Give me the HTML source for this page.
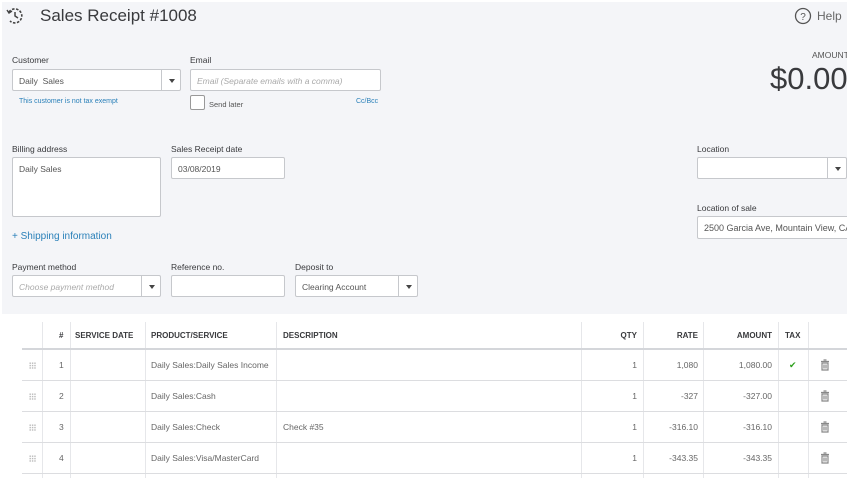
<!DOCTYPE html>
<html><head><meta charset="utf-8"><style>
*{margin:0;padding:0;box-sizing:border-box}
body{width:847px;height:478px;overflow:hidden;background:#fff;font-family:"Liberation Sans",sans-serif;color:#393a3d;position:relative}
.a{position:absolute;white-space:nowrap}
.lbl{font-size:8.5px;color:#393a3d}
.box{position:absolute;background:#fff;border:1px solid #c6c8cc;border-radius:2px}
.dd{position:absolute;top:0;bottom:0;width:19px;border-left:1px solid #c6c8cc}
.dd:after{content:"";position:absolute;left:7px;top:9px;border:3px solid transparent;border-top:4px solid #444}
.t{font-size:8.5px;color:#555}
.hl{position:absolute;left:22px;right:0;height:1px;background:#dcdde0}
.vl{position:absolute;top:322px;bottom:0;width:1px;background:#e6e7ea}
.th{position:absolute;top:331px;font-size:8px;font-weight:bold;color:#393a3d}
.c{position:absolute;font-size:8.5px;color:#666}
.r{text-align:right}
.g{position:absolute;left:29px;width:7px;height:7px;background-image:radial-gradient(circle,#bbb 0.7px,transparent 0.8px);background-size:2.4px 2.4px}
</style></head><body>
<div class="a" style="left:2px;top:2px;width:845px;height:312px;background:#f4f5f8"></div>
<svg class="a" style="left:5px;top:6px" width="20" height="20" viewBox="0 0 20 20"><path d="M4 6 A7 7 0 1 1 5 15" fill="none" stroke="#444" stroke-width="1.6" stroke-dasharray="2.5 1.5"/><path d="M10 6 V10 L13 12" fill="none" stroke="#444" stroke-width="1.5"/><path d="M2 4 L4 7 L7 5" fill="none" stroke="#444" stroke-width="1.4"/></svg>
<div class="a" style="left:40px;top:6px;font-size:17px;color:#393a3d">Sales Receipt #1008</div>
<svg class="a" style="left:794px;top:7px" width="18" height="18"><circle cx="9" cy="9" r="7.5" fill="none" stroke="#555" stroke-width="1.3"/><text x="9" y="13" font-size="10" text-anchor="middle" fill="#555" font-family="Liberation Sans">?</text></svg>
<div class="a" style="left:817px;top:9px;font-size:12px;color:#666">Help</div>

<div class="a lbl" style="left:12px;top:55px">Customer</div>
<div class="box" style="left:12px;top:69px;width:169px;height:22px"><div class="a t" style="left:6px;top:6px">Daily&nbsp; Sales</div><div class="dd" style="right:0"></div></div>
<div class="a lbl" style="left:190px;top:55px">Email</div>
<div class="box" style="left:190px;top:69px;width:191px;height:22px"><div class="a" style="left:6px;top:6px;font-size:8.5px;color:#aaa;font-style:italic">Email (Separate emails with a comma)</div></div>
<div class="a" style="left:19px;top:98px;font-size:7px;color:#2a80b9">This customer is not tax exempt</div>
<div class="box" style="left:190px;top:95px;width:15px;height:15px;border-color:#999"></div>
<div class="a" style="left:209px;top:100px;font-size:7.5px;color:#555">Send later</div>
<div class="a" style="left:356px;top:98px;font-size:7px;color:#2a80b9">Cc/Bcc</div>

<div class="a" style="left:812px;top:50px;font-size:8.5px;color:#555">AMOUNT</div>
<div class="a" style="left:770px;top:61px;font-size:31px;color:#393a3d">$0.00</div>

<div class="a lbl" style="left:12px;top:144px">Billing address</div>
<div class="box" style="left:12px;top:157px;width:149px;height:60px"><div class="a t" style="left:6px;top:6px">Daily Sales</div></div>
<div class="a lbl" style="left:171px;top:144px">Sales Receipt date</div>
<div class="box" style="left:171px;top:157px;width:114px;height:22px"><div class="a t" style="left:6px;top:6px">03/08/2019</div></div>
<div class="a" style="left:12px;top:231px;font-size:10px;color:#2a80b9">+ Shipping information</div>

<div class="a lbl" style="left:12px;top:262px">Payment method</div>
<div class="box" style="left:12px;top:275px;width:149px;height:22px"><div class="a" style="left:6px;top:6px;font-size:8.5px;color:#aaa;font-style:italic">Choose payment method</div><div class="dd" style="right:0"></div></div>
<div class="a lbl" style="left:171px;top:262px">Reference no.</div>
<div class="box" style="left:171px;top:275px;width:114px;height:22px"></div>
<div class="a lbl" style="left:295px;top:262px">Deposit to</div>
<div class="box" style="left:295px;top:275px;width:123px;height:22px"><div class="a t" style="left:6px;top:6px">Clearing Account</div><div class="dd" style="right:0"></div></div>

<div class="a lbl" style="left:697px;top:144px">Location</div>
<div class="box" style="left:697px;top:157px;width:150px;height:22px"><div class="dd" style="right:0"></div></div>
<div class="a lbl" style="left:697px;top:203px">Location of sale</div>
<div class="box" style="left:697px;top:216px;width:152px;height:23px;overflow:hidden"><div class="a t" style="left:6px;top:6px;font-size:9px">2500 Garcia Ave, Mountain View, CA</div></div>

<div class="vl" style="left:42px"></div><div class="vl" style="left:70px"></div><div class="vl" style="left:145px"></div><div class="vl" style="left:276px"></div><div class="vl" style="left:581px"></div><div class="vl" style="left:643px"></div><div class="vl" style="left:703px"></div><div class="vl" style="left:778px"></div><div class="vl" style="left:808px"></div>
<div class="hl" style="top:348px;height:2px;background:#d4d6da"></div>
<div class="hl" style="top:380px"></div><div class="hl" style="top:411px"></div><div class="hl" style="top:442px"></div><div class="hl" style="top:473px"></div>
<div class="th" style="left:59px">#</div>
<div class="th" style="left:75px">SERVICE DATE</div>
<div class="th" style="left:151px">PRODUCT/SERVICE</div>
<div class="th" style="left:283px">DESCRIPTION</div>
<div class="th r" style="left:600px;width:37px">QTY</div>
<div class="th r" style="left:650px;width:48px">RATE</div>
<div class="th r" style="left:710px;width:62px">AMOUNT</div>
<div class="th" style="left:785px">TAX</div>

<div class="g" style="top:362px"></div><div class="c" style="left:59px;top:360px">1</div><div class="c" style="left:151px;top:360px">Daily Sales:Daily Sales Income</div><div class="c r" style="left:600px;top:360px;width:37px">1</div><div class="c r" style="left:650px;top:360px;width:48px">1,080</div><div class="c r" style="left:700px;top:360px;width:72px">1,080.00</div><div class="c" style="left:789px;top:360px;color:#2ca01c;font-size:9px">✔</div>
<div class="g" style="top:393px"></div><div class="c" style="left:59px;top:391px">2</div><div class="c" style="left:151px;top:391px">Daily Sales:Cash</div><div class="c r" style="left:600px;top:391px;width:37px">1</div><div class="c r" style="left:650px;top:391px;width:48px">-327</div><div class="c r" style="left:700px;top:391px;width:72px">-327.00</div>
<div class="g" style="top:424px"></div><div class="c" style="left:59px;top:422px">3</div><div class="c" style="left:151px;top:422px">Daily Sales:Check</div><div class="c" style="left:283px;top:422px">Check #35</div><div class="c r" style="left:600px;top:422px;width:37px">1</div><div class="c r" style="left:650px;top:422px;width:48px">-316.10</div><div class="c r" style="left:700px;top:422px;width:72px">-316.10</div>
<div class="g" style="top:455px"></div><div class="c" style="left:59px;top:453px">4</div><div class="c" style="left:151px;top:453px">Daily Sales:Visa/MasterCard</div><div class="c r" style="left:600px;top:453px;width:37px">1</div><div class="c r" style="left:650px;top:453px;width:48px">-343.35</div><div class="c r" style="left:700px;top:453px;width:72px">-343.35</div>

<svg class="a" style="left:820px;top:359px" width="10" height="12"><g fill="none" stroke="#888" stroke-width="1.2"><path d="M1 2.5H9M3.5 1H6.5M2 4H8V11H2Z M4 5.5V9.5M6 5.5V9.5"/></g></svg>
<svg class="a" style="left:820px;top:390px" width="10" height="12"><g fill="none" stroke="#888" stroke-width="1.2"><path d="M1 2.5H9M3.5 1H6.5M2 4H8V11H2Z M4 5.5V9.5M6 5.5V9.5"/></g></svg>
<svg class="a" style="left:820px;top:421px" width="10" height="12"><g fill="none" stroke="#888" stroke-width="1.2"><path d="M1 2.5H9M3.5 1H6.5M2 4H8V11H2Z M4 5.5V9.5M6 5.5V9.5"/></g></svg>
<svg class="a" style="left:820px;top:452px" width="10" height="12"><g fill="none" stroke="#888" stroke-width="1.2"><path d="M1 2.5H9M3.5 1H6.5M2 4H8V11H2Z M4 5.5V9.5M6 5.5V9.5"/></g></svg>
</body></html>
